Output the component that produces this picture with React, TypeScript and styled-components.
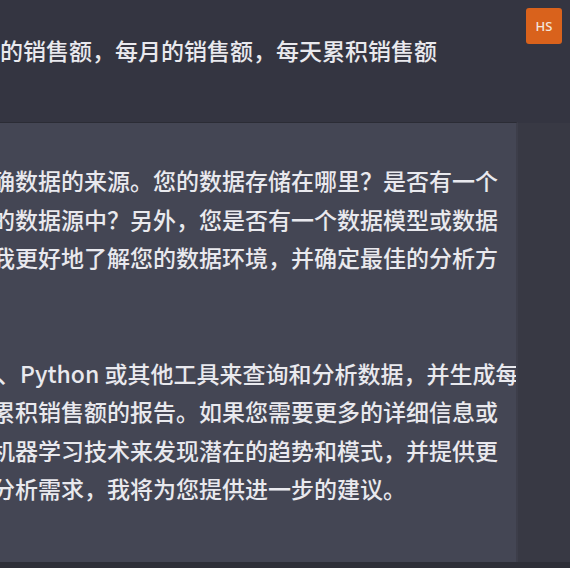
import React from "react";
import styled, { createGlobalStyle } from "styled-components";

const GlobalStyle = createGlobalStyle`
  html, body {
    margin: 0;
    padding: 0;
    background: #343541;
    overflow: hidden;
  }
  body {
    font-family: "Noto Sans CJK SC", "Noto Sans", sans-serif;
  }
`;

const Page = styled.div`
  width: 570px;
  height: 568px;
  display: flex;
  flex-direction: column;
  overflow: hidden;
  background: #343541;
`;

const UserRow = styled.div`
  height: 122px;
  flex: none;
  display: flex;
  justify-content: space-between;
  align-items: flex-start;
`;

const Text = styled.div<{ $start: number }>`
  margin-left: ${(p) => p.$start}px;
  font-size: 23px;
  font-weight: 500;
  line-height: 38.5px;
  color: #e9e9ee;
  white-space: nowrap;
`;

const UserText = styled(Text)`
  padding-top: 31px;
`;

const Avatar = styled.div`
  width: 36px;
  height: 36px;
  margin: 8px 8px 0 0;
  border-radius: 3px;
  background: #d9621c;
  color: #f3e6dc;
  font-family: "Noto Sans", sans-serif;
  font-size: 13px;
  font-weight: 500;
  display: flex;
  align-items: center;
  justify-content: center;
`;

const MiddleRow = styled.div`
  flex: 1;
  display: flex;
  min-height: 0;
`;

const AnswerPanel = styled.div`
  width: 518px;
  flex: none;
  background: #444654;
  border-top: 1px solid #2b2c35;
  border-right: 2px solid #3d3e4a;
  padding-top: 38px;
  box-sizing: border-box;
  overflow: hidden;
`;

const Gutter = styled.div`
  flex: 1;
  background: #383944;
  margin-top: 1px;
`;

const BottomStrip = styled.div`
  height: 6px;
  flex: none;
  background: #2e2f38;
`;

const Line = styled.div<{ $indent?: number }>`
  height: 38.5px;
  text-indent: ${(p) => p.$indent ?? 0}px;
`;

const answerLines: { text: string; indent?: number }[] = [
  { text: "确数据的来源。您的数据存储在哪里？是否有一个" },
  { text: "的数据源中？另外，您是否有一个数据模型或数据" },
  { text: "我更好地了解您的数据环境，并确定最佳的分析方" },
  { text: "" },
  { text: "" },
  { text: "、Python 或其他工具来查询和分析数据，并生成每", indent: 5 },
  { text: "累积销售额的报告。如果您需要更多的详细信息或" },
  { text: "机器学习技术来发现潜在的趋势和模式，并提供更" },
  { text: "分析需求，我将为您提供进一步的建议。" },
];

export default function App() {
  return (
    <>
      <GlobalStyle />
      <Page>
        <UserRow>
          <UserText $start={0}>的销售额，每月的销售额，每天累积销售额</UserText>
          <Avatar>HS</Avatar>
        </UserRow>
        <MiddleRow>
          <AnswerPanel>
            <Text $start={-8}>
              {answerLines.map((l, i) => (
                <Line key={i} $indent={l.indent}>
                  {l.text}
                </Line>
              ))}
            </Text>
          </AnswerPanel>
          <Gutter />
        </MiddleRow>
        <BottomStrip />
      </Page>
    </>
  );
}
